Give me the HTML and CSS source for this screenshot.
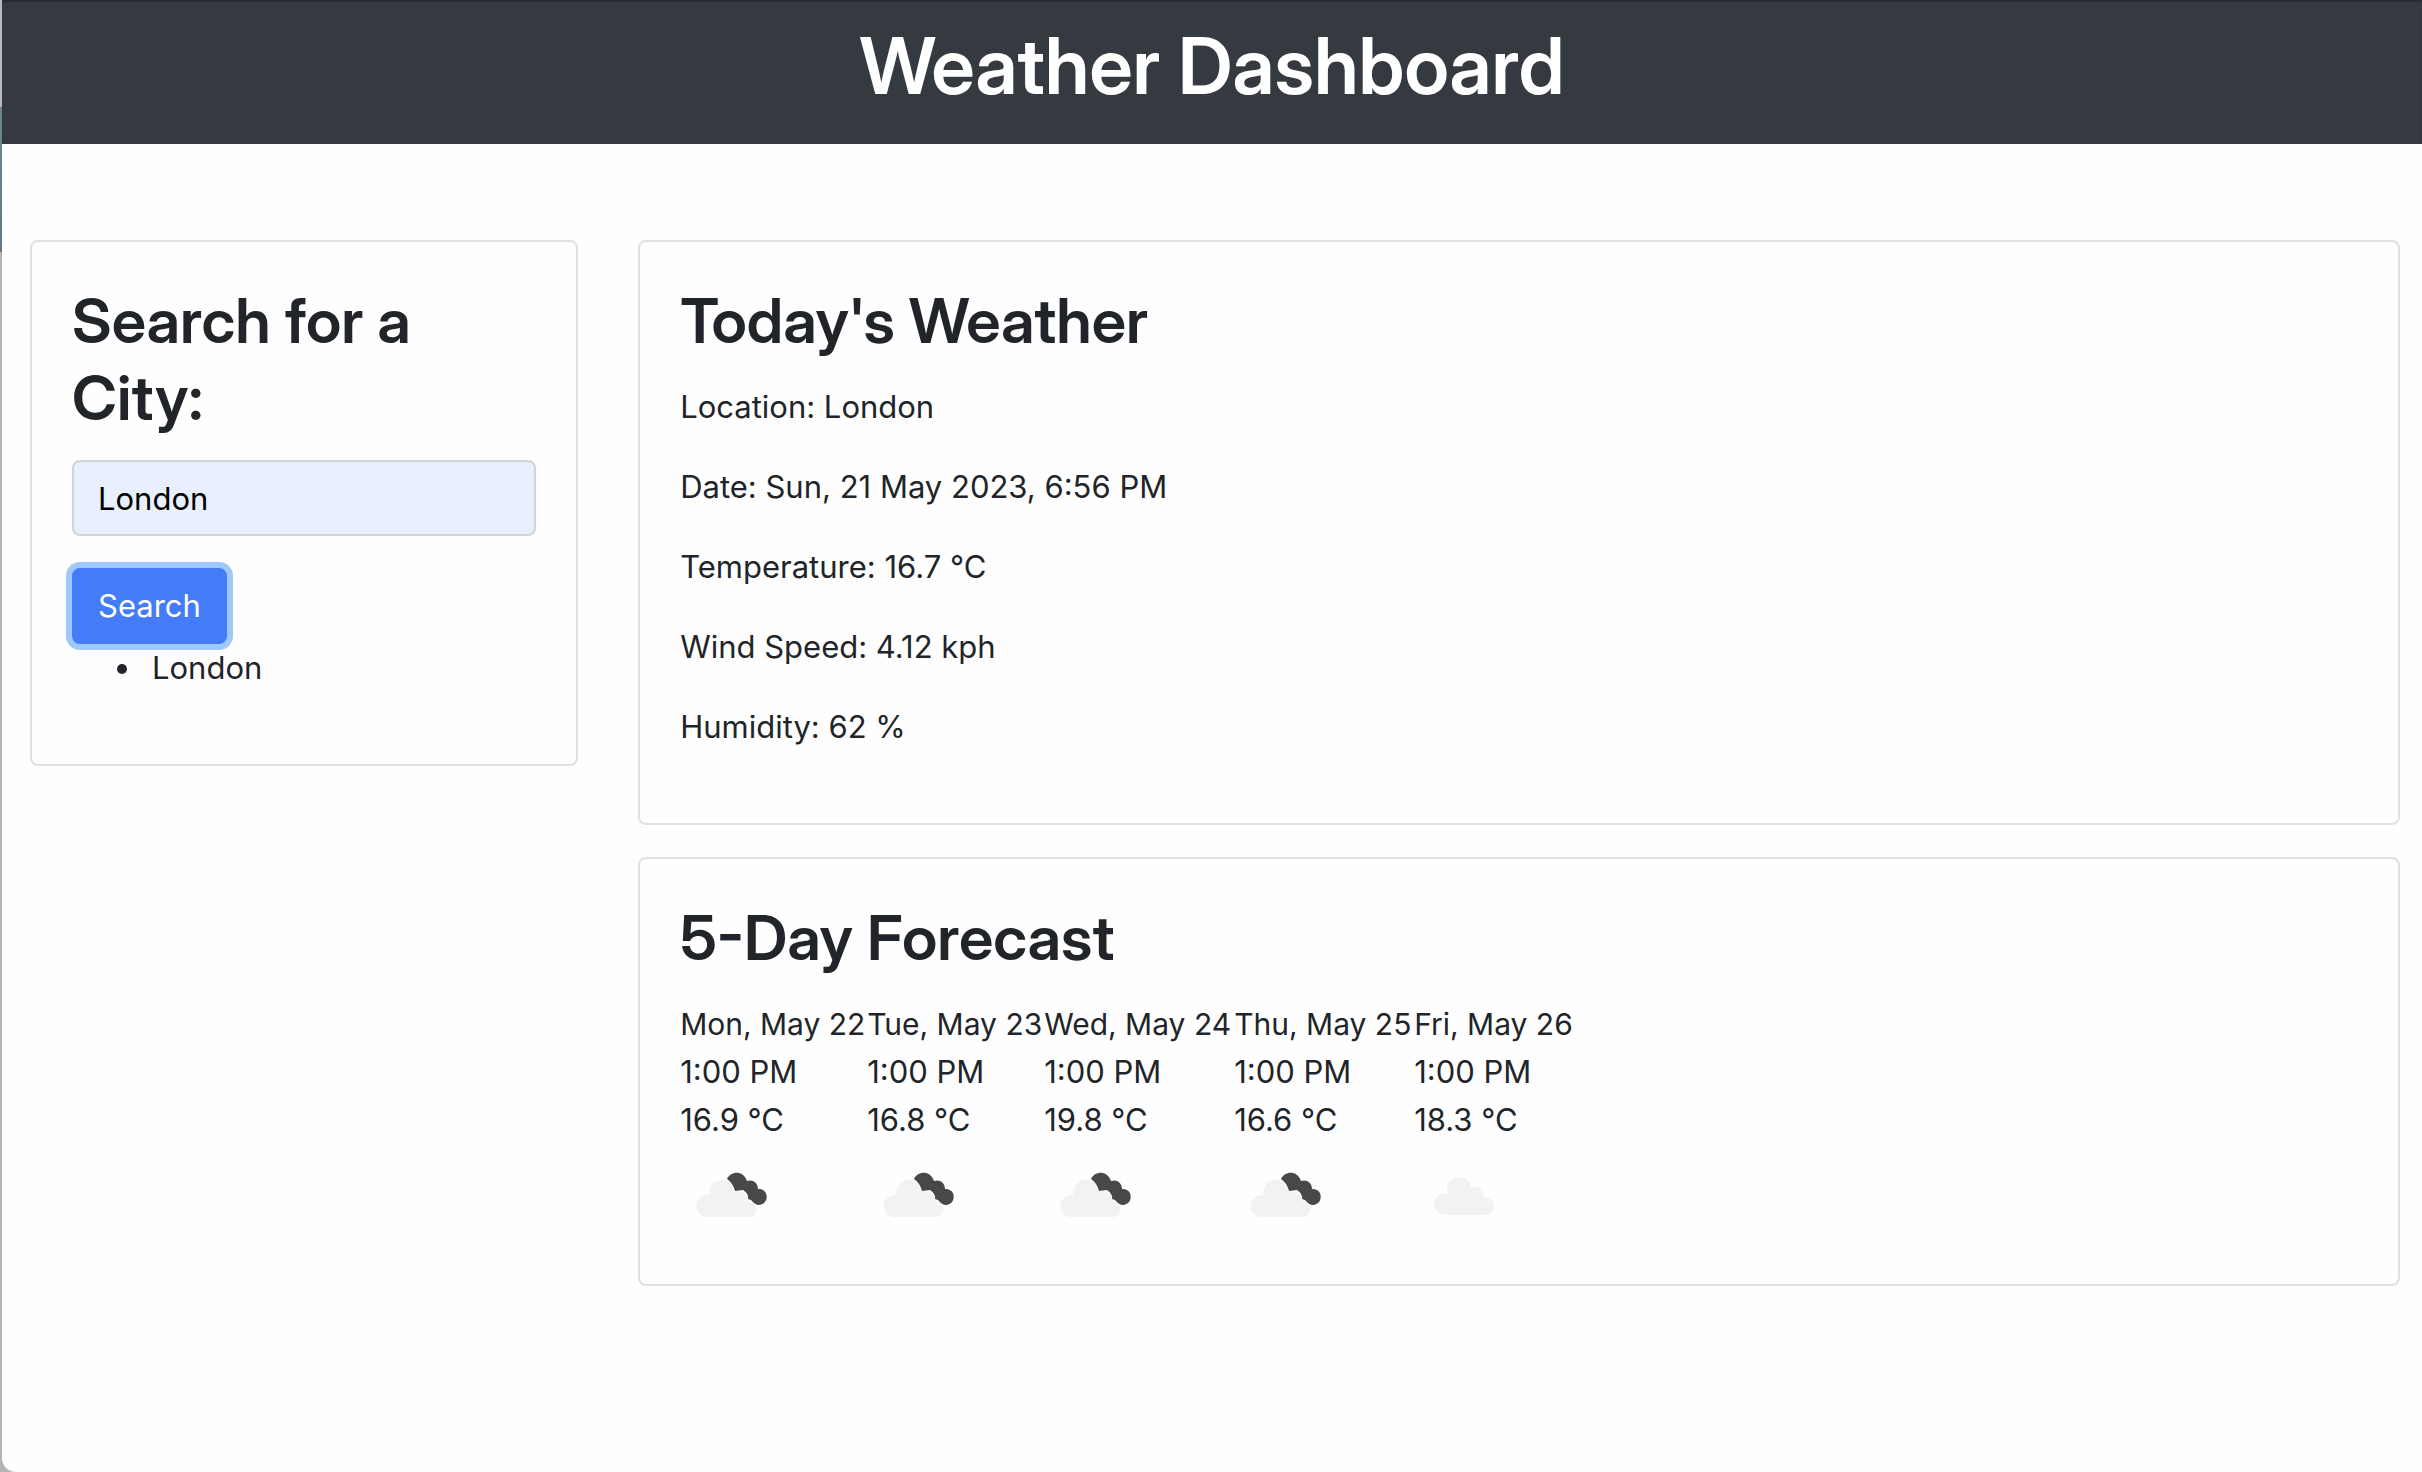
FILE: index.html
```html
<!DOCTYPE html>
<html lang="en">
<head>
<meta charset="utf-8">
<meta name="viewport" content="width=device-width, initial-scale=1">
<title>Weather Dashboard</title>
<link rel="stylesheet" href="styles.css">
</head>
<body>
<svg class="sprite" aria-hidden="true">
  <symbol id="cloud" viewBox="0 0 100 100">
    <g fill="#f2f2f2">
      <circle cx="31" cy="60" r="11"/>
      <circle cx="45" cy="45" r="12"/>
      <circle cx="62" cy="51" r="8"/>
      <circle cx="71" cy="62" r="9"/>
      <path d="M31 71V52L45 45L62 51L71 56V71z"/>
    </g>
  </symbol>
  <symbol id="broken-clouds" viewBox="0 0 100 100">
    <path fill="#484849" d="M47 35C51 27 63 26 67 37C72 35 78 38 78 45C89 44 90 60 79 61Q75 61 71 56L68 55Q69 50 63 46L55 47Q53 39 47 35z"/>
    <path fill="#f2f2f2" d="M26 73A11 11 0 0 1 29 51C29 36 44 31 51 40Q54 43 55 48C62 46 68 50 68 57C79 59 79 71 70 73z"/>
  </symbol>
</svg>
<div class="page">
  <header class="header"><h1>Weather Dashboard</h1></header>
  <main class="layout">
    <section class="card">
      <h2><label for="city">Search for a City:</label></h2>
      <form class="search">
        <input id="city" class="field" type="text" value="London">
        <button class="button" type="button">Search</button>
      </form>
      <ul class="history"><li>London</li></ul>
    </section>
    <div class="results">
      <section class="card">
        <h2>Today's Weather</h2>
        <p>Location: London</p>
        <p>Date: Sun, 21 May 2023, 6:56 PM</p>
        <p>Temperature: 16.7 °C</p>
        <p>Wind Speed: 4.12 kph</p>
        <p>Humidity: 62 %</p>
      </section>
      <section class="card">
        <h2>5-Day Forecast</h2>
        <div class="forecast">
          <div><div class="date">Mon, May 22</div><div>1:00 PM</div><div>16.9 °C</div><svg class="icon"><use href="#broken-clouds"/></svg></div>
          <div><div class="date">Tue, May 23</div><div>1:00 PM</div><div>16.8 °C</div><svg class="icon"><use href="#broken-clouds"/></svg></div>
          <div><div class="date">Wed, May 24</div><div>1:00 PM</div><div>19.8 °C</div><svg class="icon"><use href="#broken-clouds"/></svg></div>
          <div><div class="date">Thu, May 25</div><div>1:00 PM</div><div>16.6 °C</div><svg class="icon"><use href="#broken-clouds"/></svg></div>
          <div><div class="date">Fri, May 26</div><div>1:00 PM</div><div>18.3 °C</div><svg class="icon"><use href="#cloud"/></svg></div>
        </div>
      </section>
    </div>
  </main>
</div>
</body>
</html>
```
FILE: styles.css
```css
* { box-sizing: border-box; }

body {
  margin: 0;
  padding-left: 2px;
  background: linear-gradient(#b8b9b9 107px, #6c8791 107px, #647985 252px, #b4b4b4 252px);
  color: #212529;
  font: 400 31px/48px Inter, "Liberation Sans", sans-serif;
}

.sprite { position: absolute; width: 0; height: 0; }

.page {
  min-height: 100vh;
  overflow: hidden;
  border-bottom-left-radius: 14px;
  background: #fefefe;
}

.header {
  padding: 18px 16px 14px;
  background: #343a40;
  box-shadow: inset 0 2px 1px #282d32;
  color: #fff;
  text-align: center;
}

h1, h2 { font-family: "Inter Display", Inter, "Liberation Sans", sans-serif; font-variation-settings: "opsz" 32; }
h1 { margin: 0 0 16px; font-size: 78px; font-weight: 600; line-height: 96px; }
h2 { margin: 0 0 24px; font-size: 62px; font-weight: 600; line-height: 77px; }
p { margin: 0 0 32px; }

.layout {
  display: grid;
  grid-template-columns: 28fr 90fr;
  align-items: start;
  gap: 60px;
  padding: 96px 22px 96px 28px;
}

.results { display: grid; gap: 32px; }

.card {
  min-width: 0;
  padding: 40px;
  border: 2px solid #e0e0e0;
  border-radius: 8px;
  background: #fefefe;
}

.search { display: grid; justify-items: start; gap: 32px; }

.field, .button {
  height: 76px;
  padding: 12px 24px;
  border: 2px solid #ced4da;
  border-radius: 8px;
  font: inherit;
}

.field { width: 100%; background: #e8f0fe; color: #000; }

.button {
  border-color: #447bf7;
  background: #447bf7;
  box-shadow: 0 0 0 6px #9fc8fb;
  color: #fff;
}

.history { margin: 0 0 32px; padding-left: 72px; }
.history li { padding-left: 8px; }

.forecast { display: grid; grid-template-columns: 187px 177px 190px 180px auto; }
.date { font-size: 30px; white-space: nowrap; }
.icon { display: block; width: 100px; height: 100px; }
```
